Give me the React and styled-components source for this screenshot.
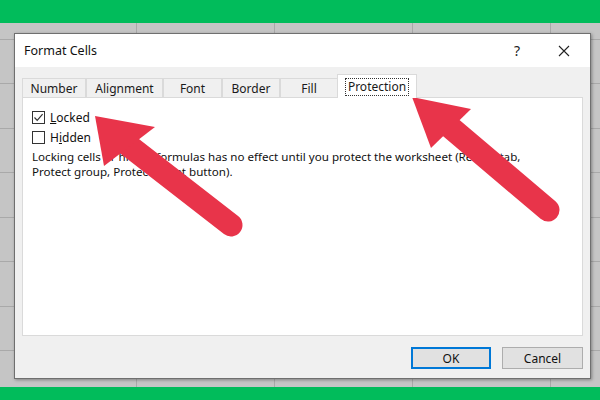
import React from 'react'
import styled, { createGlobalStyle } from 'styled-components'

const GlobalStyle = createGlobalStyle`
  body {
    margin: 0;
    font-family: "Noto Sans", "Liberation Sans", sans-serif;
    color: #1a1a1a;
  }
`

const tabs = [
  { label: 'Number', width: 64 },
  { label: 'Alignment', width: 77 },
  { label: 'Font', width: 59 },
  { label: 'Border', width: 58 },
  { label: 'Fill', width: 58 },
  { label: 'Protection', width: 80, active: true },
]

function CheckMark() {
  return (
    <svg width="11" height="11" viewBox="0 0 11 11">
      <polyline points="1.5,5.5 4.2,8.3 9.6,2.2" fill="none" stroke="#333" strokeWidth="1.2" />
    </svg>
  )
}

function CloseIcon() {
  return (
    <svg width="12" height="12" viewBox="0 0 12 12">
      <path d="M1 1 L11 11 M11 1 L1 11" stroke="#222" strokeWidth="1.1" />
    </svg>
  )
}

function Arrows() {
  return (
    <Overlay viewBox="0 0 600 400">
      <line x1="128" y1="145" x2="231" y2="225" stroke="#e8344a" strokeWidth="23" strokeLinecap="round" />
      <polygon points="95,116 155,127 104,166" fill="#e8344a" />
      <line x1="450" y1="127" x2="548" y2="210" stroke="#e8344a" strokeWidth="23" strokeLinecap="round" />
      <polygon points="412,97 471,109 431,148" fill="#e8344a" />
    </Overlay>
  )
}

export default function App() {
  return (
    <Page>
      <GlobalStyle />
      <GreenBar $h={23} />
      <Sheet>
        <Dialog>
          <TitleBar>
            <Title>Format Cells</Title>
            <TitleButtons>
              <Help>?</Help>
              <CloseIcon />
            </TitleButtons>
          </TitleBar>
          <Body>
            <TabRow>
              {tabs.map(t => (
                <Tab key={t.label} $w={t.width} $active={t.active}>
                  {t.active ? <Focus>{t.label}</Focus> : t.label}
                </Tab>
              ))}
            </TabRow>
            <Panel>
              <CheckRow>
                <Box><CheckMark /></Box>
                <Label><u>L</u>ocked</Label>
              </CheckRow>
              <CheckRow>
                <Box />
                <Label>H<u>i</u>dden</Label>
              </CheckRow>
              <Note>
                Locking cells or hiding formulas has no effect until you protect the worksheet (Review tab,
                <br />
                Protect group, Protect Sheet button).
              </Note>
            </Panel>
            <ButtonRow>
              <Button $primary>OK</Button>
              <Button>Cancel</Button>
            </ButtonRow>
          </Body>
        </Dialog>
      </Sheet>
      <GreenBar $h={13} />
      <Arrows />
    </Page>
  )
}

const Page = styled.div`
  position: relative;
  width: 600px;
  height: 400px;
  display: flex;
  flex-direction: column;
  overflow: hidden;
`

const GreenBar = styled.div`
  height: ${p => p.$h}px;
  flex: none;
  background: #01bc5b;
`

const Sheet = styled.div`
  flex: 1;
  display: flex;
  padding: 10px 9px 8px 14px;
  background-color: #c5c5c5;
  background-image:
    repeating-linear-gradient(90deg, transparent 0 136px, #a9a9a9 136px 137px, transparent 137px 138px),
    repeating-linear-gradient(180deg, transparent 0 16px, #a9a9a9 16px 17px, transparent 17px 44.5px);
  background-position: 0 0, 0 0;
`

const Dialog = styled.div`
  flex: 1;
  display: flex;
  flex-direction: column;
  border: 1px solid #6f6f6f;
  background: #f0f0f0;
  box-shadow: 1px 1px 3px rgba(0, 0, 0, 0.35);
`

const TitleBar = styled.div`
  height: 33px;
  background: #fff;
  display: flex;
  align-items: center;
  justify-content: space-between;
  padding: 0 20px 0 9px;
`

const Title = styled.div`
  font-size: 12.5px;
  color: #111;
`

const TitleButtons = styled.div`
  display: flex;
  align-items: center;
  gap: 38px;
`

const Help = styled.span`
  font-size: 14px;
  color: #222;
`

const Body = styled.div`
  flex: 1;
  display: flex;
  flex-direction: column;
  padding: 8px 7px 9px 7px;
`

const TabRow = styled.div`
  display: flex;
  align-items: flex-end;
  height: 23px;
  margin-bottom: -1px;
  position: relative;
  z-index: 1;
`

const Tab = styled.div`
  width: ${p => p.$w}px;
  height: ${p => (p.$active ? 24 : 20)}px;
  box-sizing: border-box;
  display: flex;
  align-items: center;
  justify-content: center;
  font-size: 12px;
  color: #1a1a1a;
  background: ${p => (p.$active ? '#fff' : '#f0f0f0')};
  border: 1px solid #dadada;
  border-bottom: ${p => (p.$active ? 'none' : '1px solid #dadada')};
  margin-left: ${p => (p.$active ? '-1px' : '0')};
  & + & {
    border-left: ${p => (p.$active ? '1px solid #dadada' : 'none')};
  }
`

const Focus = styled.span`
  border: 1px dotted #333;
  padding: 0 2px 1px;
  line-height: 15px;
`

const Panel = styled.div`
  flex: 1;
  background: #fff;
  border: 1px solid #dadada;
  padding: 9px 9px;
  display: flex;
  flex-direction: column;
`

const CheckRow = styled.div`
  display: flex;
  align-items: center;
  gap: 5px;
  height: 20px;
`

const Box = styled.div`
  width: 13px;
  height: 13px;
  box-sizing: border-box;
  border: 1px solid #333;
  display: flex;
  align-items: center;
  justify-content: center;
`

const Label = styled.span`
  font-size: 12px;
  color: #111;
`

const Note = styled.div`
  margin-top: 3px;
  font-size: 11.6px;
  line-height: 14.5px;
  color: #111;
  white-space: nowrap;
`

const ButtonRow = styled.div`
  display: flex;
  justify-content: flex-end;
  gap: 11px;
  margin-top: 11px;
`

const Button = styled.div`
  width: ${p => (p.$primary ? 80 : 81)}px;
  height: 22px;
  box-sizing: border-box;
  display: flex;
  align-items: center;
  justify-content: center;
  font-size: 12px;
  color: #111;
  background: #e1e1e1;
  border: ${p => (p.$primary ? '2px solid #0078d7' : '1px solid #adadad')};
`

const Overlay = styled.svg`
  position: absolute;
  top: 0;
  left: 0;
  width: 600px;
  height: 400px;
  pointer-events: none;
`
